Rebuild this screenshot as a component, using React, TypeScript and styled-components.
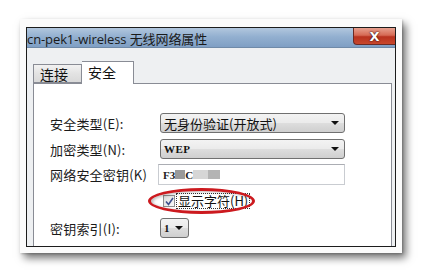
import React from "react";
import styled, { createGlobalStyle } from "styled-components";

const Global = createGlobalStyle`
  html, body { margin: 0; padding: 0; background: #ffffff; }
  body { width: 422px; height: 275px; overflow: hidden; font-family: "Noto Sans CJK SC", "Noto Sans", sans-serif; }
`;

const Stage = styled.div`
  padding: 19px 0 0 20px;
`;

const PhotoFrame = styled.div`
  width: 382px;
  height: 234px;
  box-sizing: border-box;
  padding: 8px 6px 6px 6px;
  background: #fbfbfb;
  box-shadow: 4px 5px 8px rgba(0, 0, 0, 0.55), 1px 1px 2px rgba(0, 0, 0, 0.2);
  display: flex;
`;

const Win = styled.div`
  flex: 1;
  border: 1px solid #1c1c1c;
  background: #eef0f2;
  overflow: hidden;
  display: flex;
  flex-direction: column;
`;

const TitleBar = styled.div`
  height: 19px;
  flex: none;
  display: flex;
  align-items: center;
  justify-content: space-between;
  background: linear-gradient(180deg, #b2c7de 0%, #93b0d0 45%, #7f9fc4 100%);
  border-bottom: 1px solid #6f8aa8;
`;

const TitleText = styled.span`
  font-family: "Open Sans", "Noto Sans CJK SC", sans-serif;
  font-size: 13px;
  color: #1a1a1a;
  margin-top: 1px;
  letter-spacing: -0.1px;
  white-space: nowrap;
`;

const CloseBtn = styled.div`
  width: 42px;
  height: 17px;
  align-self: flex-start;
  box-sizing: border-box;
  border: 1px solid #6b2a24;
  border-top: none;
  border-right: none;
  border-radius: 0 0 0 4px;
  background: linear-gradient(180deg, #e7a08f 0%, #d66a55 45%, #b8321f 55%, #c8472c 100%);
  display: flex;
  align-items: center;
  justify-content: center;
  color: #ffffff;
  font-family: "DejaVu Sans", sans-serif;
  font-weight: bold;
  font-size: 13px;
  text-shadow: 0 0 1px #3a1010, 0 0 2px #3a1010;
`;

const Body = styled.div`
  padding: 13px 3px 0 6px;
  display: flex;
  flex-direction: column;
`;

const TabStrip = styled.div`
  display: flex;
  align-items: flex-end;
  height: 22px;
  position: relative;
  z-index: 1;
`;

const Tab = styled.div<{ $active?: boolean }>`
  box-sizing: border-box;
  height: ${(p) => (p.$active ? 23 : 19)}px;
  width: ${(p) => (p.$active ? 52 : 49)}px;
  margin-bottom: ${(p) => (p.$active ? -1 : 0)}px;
  border: 1px solid #898c95;
  border-bottom: ${(p) => (p.$active ? "none" : "1px solid #898c95")};
  border-left: ${(p) => (p.$active ? "none" : "1px solid #898c95")};
  background: ${(p) => (p.$active ? "#ffffff" : "linear-gradient(180deg, #f2f2f2 0%, #e3e3e3 50%, #d9d9d9 100%)")};
  font-size: 14px;
  color: #111;
  padding-left: 6px;
  line-height: ${(p) => (p.$active ? 20 : 18)}px;
`;

const Panel = styled.div`
  border: 1px solid #898c95;
  background: #ffffff;
  height: 200px;
  padding: 29px 0 0 16px;
  display: flex;
  flex-direction: column;
`;

const Row = styled.div<{ $top: number }>`
  display: flex;
  align-items: center;
  margin-top: ${(p) => p.$top}px;
`;

const Label = styled.div`
  width: 110px;
  flex: none;
  font-size: 13px;
  color: #1a1a1a;
  white-space: nowrap;
  letter-spacing: 0.2px;
`;

const Combo = styled.div<{ $w: number }>`
  box-sizing: border-box;
  width: ${(p) => p.$w}px;
  height: 20px;
  border: 1px solid #707070;
  border-radius: 3px;
  background: linear-gradient(180deg, #f3f3f3 0%, #ebebeb 48%, #dddddd 52%, #cfcfcf 100%);
  display: flex;
  align-items: center;
  justify-content: space-between;
  padding: 0 5px 0 3px;
  font-size: 13px;
  color: #111;
`;

const Mono = styled.span`
  font-family: "Liberation Serif", serif;
  font-weight: bold;
  font-size: 11px;
  letter-spacing: 0.5px;
`;

const Arrow = styled.span`
  width: 0;
  height: 0;
  border-left: 4px solid transparent;
  border-right: 4px solid transparent;
  border-top: 4px solid #111;
`;

const TextBox = styled.div`
  box-sizing: border-box;
  width: 187px;
  height: 21px;
  margin-left: -2px;
  border: 1px solid #c9ccd1;
  border-top-color: #abadb3;
  background: #fff;
  display: flex;
  align-items: center;
  padding-left: 4px;
  font-family: "Liberation Serif", serif;
  font-weight: bold;
  font-size: 11px;
  color: #222;
`;

const Blur = styled.span<{ $w: number; $c: string }>`
  display: inline-block;
  width: ${(p) => p.$w}px;
  height: 9px;
  background: ${(p) => p.$c};
  filter: blur(0.6px);
`;

const CheckWrap = styled.div`
  position: relative;
  margin-left: 3px;
  display: flex;
  align-items: center;
  height: 16px;
`;

const CheckBox = styled.div`
  box-sizing: border-box;
  width: 12px;
  height: 12px;
  border: 1px solid #8e8f8f;
  background: linear-gradient(135deg, #dcdcdc 0%, #f8f8f8 100%);
  display: flex;
  align-items: center;
  justify-content: center;
`;

const CheckLabel = styled.span`
  margin-left: 1px;
  padding: 0 1px;
  border: 1px dotted #333;
  font-size: 13px;
  line-height: 14px;
  color: #111;
`;

const Ellipse = styled.div`
  position: absolute;
  left: -15px;
  top: -5px;
  width: 107px;
  height: 26px;
  box-sizing: border-box;
  border: 3px solid #cc1a1f;
  border-radius: 50%;
  box-shadow: inset 2px 1px 3px rgba(0, 0, 0, 0.25);
  pointer-events: none;
`;

export default function App() {
  return (
    <>
      <Global />
      <Stage>
        <PhotoFrame>
          <Win>
            <TitleBar>
              <TitleText>cn-pek1-wireless 无线网络属性</TitleText>
              <CloseBtn>X</CloseBtn>
            </TitleBar>
            <Body>
              <TabStrip>
                <Tab>连接</Tab>
                <Tab $active>安全</Tab>
              </TabStrip>
              <Panel>
                <Row $top={0}>
                  <Label>安全类型(E):</Label>
                  <Combo $w={185}>
                    <span>无身份验证(开放式)</span>
                    <Arrow />
                  </Combo>
                </Row>
                <Row $top={6}>
                  <Label>加密类型(N):</Label>
                  <Combo $w={185}>
                    <Mono>WEP</Mono>
                    <Arrow />
                  </Combo>
                </Row>
                <Row $top={5}>
                  <Label>网络安全密钥(K)</Label>
                  <TextBox>
                    <span>F3</span>
                    <Blur $w={10} $c="#9a9a9a" />
                    <span>C</span>
                    <Blur $w={15} $c="#d6d6d6" />
                    <Blur $w={12} $c="#b4b4b4" />
                  </TextBox>
                </Row>
                <Row $top={8}>
                  <Label />
                  <CheckWrap>
                    <Ellipse />
                    <CheckBox>
                      <svg width="9" height="9" viewBox="0 0 9 9">
                        <path d="M1 4.5 L3.5 7.5 L8 1" fill="none" stroke="#3b4f8c" strokeWidth="1.6" />
                      </svg>
                    </CheckBox>
                    <CheckLabel>显示字符(H)</CheckLabel>
                  </CheckWrap>
                </Row>
                <Row $top={9}>
                  <Label>密钥索引(I):</Label>
                  <Combo $w={29}>
                    <Mono>1</Mono>
                    <Arrow />
                  </Combo>
                </Row>
              </Panel>
            </Body>
          </Win>
        </PhotoFrame>
      </Stage>
    </>
  );
}
